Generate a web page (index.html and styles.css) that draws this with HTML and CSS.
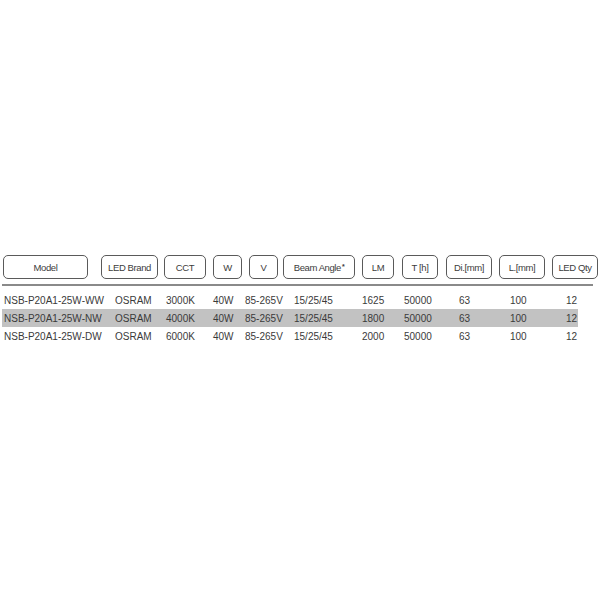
FILE: index.html
```html
<!DOCTYPE html>
<html>
<head>
<meta charset="utf-8">
<link rel="stylesheet" href="styles.css">
</head>
<body>
<div class="sheet">
  <div class="heads">
    <div class="hd c-model">Model</div>
    <div class="hd c-brand">LED Brand</div>
    <div class="hd c-cct">CCT</div>
    <div class="hd c-w">W</div>
    <div class="hd c-v">V</div>
    <div class="hd c-beam">Beam Angle<sup>*</sup></div>
    <div class="hd c-lm">LM</div>
    <div class="hd c-t">T [h]</div>
    <div class="hd c-di">Di.[mm]</div>
    <div class="hd c-l">L.[mm]</div>
    <div class="hd c-qty">LED Qty</div>
  </div>
  <div class="rule"></div>
  <div class="rows">
    <div class="row">
      <span>NSB-P20A1-25W-WW</span><span>OSRAM</span><span>3000K</span><span>40W</span><span>85-265V</span><span>15/25/45</span><span>1625</span><span>50000</span><span>63</span><span>100</span><span>12</span>
    </div>
    <div class="row alt">
      <span>NSB-P20A1-25W-NW</span><span>OSRAM</span><span>4000K</span><span>40W</span><span>85-265V</span><span>15/25/45</span><span>1800</span><span>50000</span><span>63</span><span>100</span><span>12</span>
    </div>
    <div class="row">
      <span>NSB-P20A1-25W-DW</span><span>OSRAM</span><span>6000K</span><span>40W</span><span>85-265V</span><span>15/25/45</span><span>2000</span><span>50000</span><span>63</span><span>100</span><span>12</span>
    </div>
  </div>
</div>
</body>
</html>
```

FILE: styles.css
```css
html, body {
  margin: 0;
  padding: 0;
  background: #ffffff;
}

.sheet {
  padding-top: 255px;
  font-family: "Liberation Sans", Arial, sans-serif;
  color: #3a3a3a;
}

.heads {
  display: flex;
  align-items: stretch;
  height: 24px;
}

.hd {
  box-sizing: border-box;
  border: 1.5px solid #5a5a5a;
  border-radius: 5px;
  display: flex;
  align-items: center;
  justify-content: center;
  font-size: 9.5px;
  letter-spacing: -0.4px;
  color: #3c3c3c;
  white-space: nowrap;
}

.hd sup {
  font-size: 7px;
  font-weight: bold;
  vertical-align: 3px;
  line-height: 0;
  margin-left: 1px;
}

.c-model { margin-left: 3px; width: 85px; }
.c-brand { margin-left: 13px; width: 57px; }
.c-cct { margin-left: 6px; width: 42px; }
.c-w { margin-left: 7px; width: 29px; }
.c-v { margin-left: 7px; width: 29px; }
.c-beam { margin-left: 5px; width: 72px; }
.c-lm { margin-left: 7px; width: 32px; }
.c-t { margin-left: 8px; width: 36px; }
.c-di { margin-left: 8px; width: 46px; }
.c-l { margin-left: 7px; width: 46px; }
.c-qty { margin-left: 7px; width: 46px; }

.rule {
  margin: 5px 7px 0 2px;
  height: 2px;
  background: #8a8a8a;
}

.rows {
  margin-top: 5px;
  width: 576px;
  margin-left: 2px;
}

.row {
  display: grid;
  grid-template-columns: 111px 51px 47px 32px 49px 68px 42px 55px 51px 56px 1fr;
  height: 18px;
  align-items: center;
  padding-left: 2px;
  font-size: 10px;
  color: #3a3a3a;
  white-space: nowrap;
}

.alt {
  background: #c2c2c2;
}
```
